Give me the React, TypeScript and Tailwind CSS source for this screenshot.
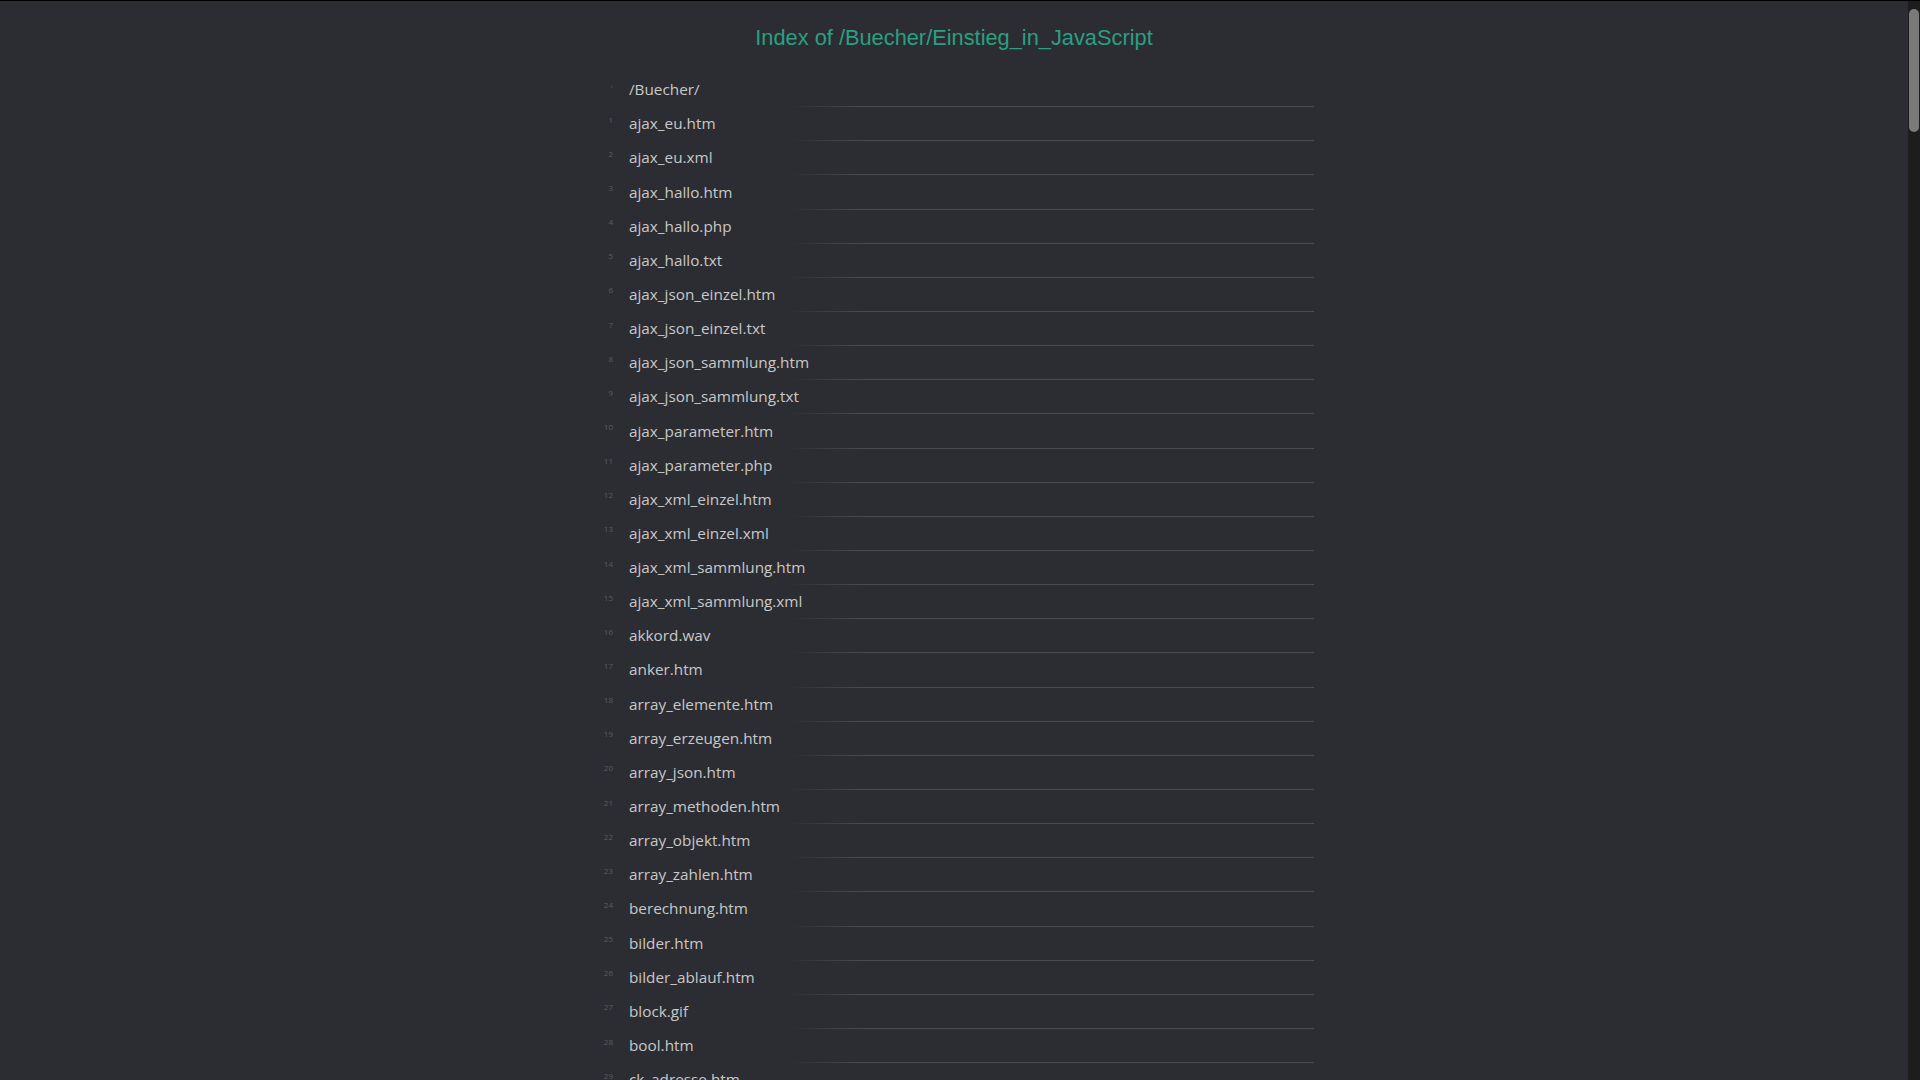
const files = [
  '/Buecher/',
  'ajax_eu.htm',
  'ajax_eu.xml',
  'ajax_hallo.htm',
  'ajax_hallo.php',
  'ajax_hallo.txt',
  'ajax_json_einzel.htm',
  'ajax_json_einzel.txt',
  'ajax_json_sammlung.htm',
  'ajax_json_sammlung.txt',
  'ajax_parameter.htm',
  'ajax_parameter.php',
  'ajax_xml_einzel.htm',
  'ajax_xml_einzel.xml',
  'ajax_xml_sammlung.htm',
  'ajax_xml_sammlung.xml',
  'akkord.wav',
  'anker.htm',
  'array_elemente.htm',
  'array_erzeugen.htm',
  'array_json.htm',
  'array_methoden.htm',
  'array_objekt.htm',
  'array_zahlen.htm',
  'berechnung.htm',
  'bilder.htm',
  'bilder_ablauf.htm',
  'block.gif',
  'bool.htm',
  'ck_adresse.htm',
  'ck_auswahl.htm',
  'ck_formular.htm',
]

function Row({ index, name }: { index: number; name: string }) {
  return (
    <li className="flex h-[34.15px] flex-col">
      <div className="flex flex-1 items-center">
        <span className="mb-2 w-[19px] text-right font-['Open_Sans',sans-serif] text-[8px] text-[#5a5b60]">
          {index === 0 ? '‹' : index}
        </span>
        <a
          className="ml-[16px] font-['Open_Sans','Noto_Sans',sans-serif] text-[15.3px] text-[#c8c8c8]"
          href="#">
          {name}
        </a>
      </div>
      <div className="h-px bg-linear-to-r from-transparent from-[27%] to-[#4a4b50] to-[37%]" />
    </li>
  )
}

export default function App() {
  return (
    <div className="flex h-screen overflow-hidden border-t border-black bg-[#2c2d32]">
      <main className="flex-1">
        <h1 className="pt-[23px] text-center font-['Liberation_Sans',Arial,sans-serif] text-[21.8px] leading-7 text-[#2a9f82]">
          Index of /Buecher/Einstieg_in_JavaScript
        </h1>
        <ul className="mx-auto mt-[21px] w-[720px]">
          {files.map((name, i) => (
            <Row
              index={i}
              key={name}
              name={name}
            />
          ))}
        </ul>
      </main>
      <div className="w-3 bg-[#1d1d1d] px-px pt-[8px]">
        <div className="h-[123px] rounded-full bg-[#7a7a7a]" />
      </div>
    </div>
  )
}
